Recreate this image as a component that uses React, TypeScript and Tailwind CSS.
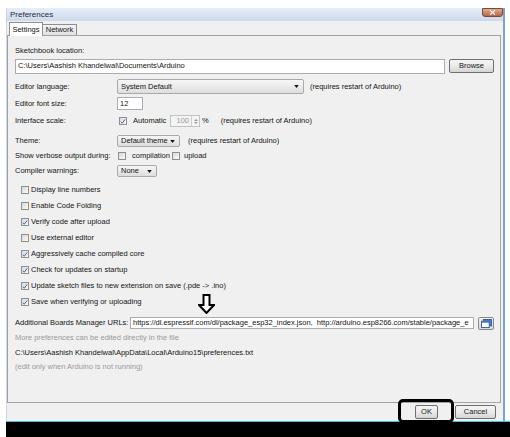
import React from "react";

function Box({ checked }: { checked?: boolean }) {
  return (
    <span className="w-[8px] h-[8px] border border-[#8e8f8f] bg-linear-to-br from-[#d8d8d8] to-[#fbfbfb] flex items-center justify-center shrink-0">
      {checked && (
        <svg viewBox="0 0 8 8" className="w-[7px] h-[7px]">
          <path d="M1.3 4.3 L3.1 6.3 L6.8 1.2" stroke="#3b5ba6" strokeWidth="1.3" fill="none" />
        </svg>
      )}
    </span>
  );
}

function Tri() {
  return (
    <svg viewBox="0 0 6 4" className="w-[5px] h-[3px] shrink-0">
      <path d="M0 0 H6 L3 4 Z" fill="#111" />
    </svg>
  );
}

function Drop({ w, h, label }: { w: string; h: string; label: string }) {
  return (
    <div className={`${w} ${h} border border-[#a9a9a9] rounded-[2px] bg-linear-to-b from-[#f6f6f6] to-[#dedede] flex items-center justify-between pl-[3px] pr-[4px] shrink-0`}>
      <span>{label}</span>
      <Tri />
    </div>
  );
}

function Btn({ w, label }: { w: string; label: string }) {
  return (
    <div className={`${w} h-[14px] border border-[#707070] rounded-[2px] bg-linear-to-b from-[#f4f4f4] via-[#ebebeb] to-[#d4d4d4] flex items-center justify-center shrink-0`}>
      {label}
    </div>
  );
}

const checks: [string, boolean][] = [
  ["Display line numbers", false],
  ["Enable Code Folding", false],
  ["Verify code after upload", true],
  ["Use external editor", false],
  ["Aggressively cache compiled core", true],
  ["Check for updates on startup", true],
  ["Update sketch files to new extension on save (.pde -> .ino)", true],
  ["Save when verifying or uploading", true],
];

export default function App() {
  return (
    <div className="w-[510px] h-[437px] bg-white relative overflow-hidden font-['Liberation_Sans',Arial,sans-serif] text-[7.5px] leading-none text-[#141414]">
      <div className="ml-[6px] mt-[8px] w-[499px] h-[413px] flex flex-col bg-[#f0f0f0] border-l border-r-2 border-l-[#c9d5ea] border-r-[#7aa3d4]">
        {/* title bar */}
        <div className="h-[13px] flex items-start justify-between bg-linear-to-b from-[#e6eef8] to-[#cddaeb] shrink-0">
          <span className="ml-[3px] mt-[3px] text-[8px] text-[#1e2a3a]">Preferences</span>
          <div className="w-[21px] h-[9px] border border-[#7e4a36] rounded-b-[3px] bg-linear-to-b from-[#dfa98d] to-[#b5664a] flex items-center justify-center">
            <svg viewBox="0 0 8 6" className="w-[7px] h-[5px]">
              <path d="M1 0.5 L7 5.5 M7 0.5 L1 5.5" stroke="#fff" strokeWidth="1.4" />
            </svg>
          </div>
        </div>
        {/* tabs */}
        <div className="h-[14px] flex items-end pl-[2px] shrink-0 relative z-10">
          <div className="w-[34px] h-[14px] -mb-px bg-white border border-b-0 border-[#8c8e94] flex items-center justify-center">
            Settings
          </div>
          <div className="w-[34px] h-[11px] bg-linear-to-b from-[#f2f2f2] to-[#e2e2e2] border border-l-0 border-b-0 border-[#8c8e94] flex items-center justify-center">
            Network
          </div>
        </div>
        {/* panel */}
        <div className="h-[368px] mr-[2px] border border-[#a3a3a3] bg-[#f0f0f0] flex flex-col pl-[7px] pr-[6px] pt-[8px] shrink-0 relative">
          <div className="h-[14px] flex items-center">Sketchbook location:</div>
          <div className="h-[16px] flex items-center gap-[4px]">
            <div className="w-[430px] h-[15px] bg-white border border-[#abadb3] flex items-center pl-[2px]">
              C:\Users\Aashish Khandelwal\Documents\Arduino
            </div>
            <Btn w="w-[45px]" label="Browse" />
          </div>
          <div className="h-[15px] mt-[5px] flex items-center">
            <span className="w-[102px] shrink-0">Editor language:</span>
            <Drop w="w-[187px]" h="h-[15px]" label="System Default" />
            <span className="ml-[6px]">(requires restart of Arduino)</span>
          </div>
          <div className="h-[15px] mt-[2px] flex items-center">
            <span className="w-[102px] shrink-0">Editor font size:</span>
            <div className="w-[26px] h-[13px] bg-white border border-[#abadb3] flex items-center pl-[2px]">12</div>
          </div>
          <div className="h-[14px] mt-[3px] flex items-center">
            <span className="w-[104px] shrink-0">Interface scale:</span>
            <Box checked />
            <span className="ml-[6px] w-[37px]">Automatic</span>
            <div className="w-[30px] h-[12px] border border-[#c2c2c2] bg-[#f4f4f4] flex items-center justify-end">
              <span className="text-[#9a9a9a] mr-[2px]">100</span>
              <div className="w-[8px] h-full border-l border-[#d0d0d0] flex flex-col items-center justify-center gap-[1px]">
                <svg viewBox="0 0 6 3" className="w-[4px] h-[2px]"><path d="M0 3 L3 0 L6 3 Z" fill="#9a9a9a" /></svg>
                <svg viewBox="0 0 6 3" className="w-[4px] h-[2px]"><path d="M0 0 H6 L3 3 Z" fill="#9a9a9a" /></svg>
              </div>
            </div>
            <span className="ml-[2px]">%</span>
            <span className="ml-[12px]">(requires restart of Arduino)</span>
          </div>
          <div className="h-[14px] mt-[6px] flex items-center">
            <span className="w-[102px] shrink-0">Theme:</span>
            <Drop w="w-[63px]" h="h-[12px]" label="Default theme" />
            <span className="ml-[8px]">(requires restart of Arduino)</span>
          </div>
          <div className="h-[14px] mt-[1px] flex items-center">
            <span className="w-[103px] shrink-0">Show verbose output during:</span>
            <div className="w-[54px] flex items-center gap-[6px]">
              <Box />
              <span>compilation</span>
            </div>
            <div className="flex items-center gap-[4px]">
              <Box />
              <span>upload</span>
            </div>
          </div>
          <div className="h-[14px] mt-[1px] flex items-center">
            <span className="w-[102px] shrink-0">Compiler warnings:</span>
            <Drop w="w-[40px]" h="h-[12px]" label="None" />
          </div>
          <div className="mt-[4px] flex flex-col pl-[6px]">
            {checks.map(([t, c]) => (
              <div key={t} className="h-[16px] flex items-center gap-[2px]">
                <Box checked={c} />
                <span>{t}</span>
              </div>
            ))}
          </div>
          <div className="h-[14px] mt-[6px] flex items-center">
            <span className="w-[115px] shrink-0">Additional Boards Manager URLs:</span>
            <div className="w-[345px] h-[12px] bg-white border border-[#abadb3] flex items-center pl-[2px] overflow-hidden whitespace-nowrap">
              https://dl.espressif.com/dl/package_esp32_index.json,&nbsp; http://arduino.esp8266.com/stable/package_e
            </div>
            <div className="ml-[4px] w-[16px] h-[13px] border border-[#8a8a8a] rounded-[2px] bg-linear-to-b from-[#f4f4f4] to-[#d6d6d6] flex items-center justify-center">
              <svg viewBox="0 0 12 10" className="w-[11px] h-[9px]">
                <rect x="2.5" y="0.5" width="9" height="7" fill="#4f7fc4" stroke="#2c58a0" />
                <rect x="0.5" y="2.5" width="8.5" height="7" fill="#fff" stroke="#2c58a0" />
                <rect x="0.5" y="2.5" width="8.5" height="1.6" fill="#3f73c0" />
              </svg>
            </div>
          </div>
          <div className="h-[14px] mt-[1px] flex items-center text-[#9a9a9a]">More preferences can be edited directly in the file</div>
          <div className="h-[14px] mt-[1px] flex items-center">C:\Users\Aashish Khandelwal\AppData\Local\Arduino15\preferences.txt</div>
          <div className="h-[14px] flex items-center text-[#9a9a9a]">(edit only when Arduino is not running)</div>

          {/* annotation arrow */}
          <svg viewBox="0 0 17 20" className="absolute left-[190px] top-[258px] w-[17px] h-[20px]">
            <path d="M5.5 1 H11.5 V11 H16 L8.5 19 L1 11 H5.5 Z" fill="#fff" stroke="#000" strokeWidth="2" strokeLinejoin="miter" />
          </svg>
        </div>
        {/* bottom buttons */}
        <div className="h-[18px] flex items-center justify-end pr-[7px] gap-[17px] shrink-0">
          <Btn w="w-[23px]" label="OK" />
          <Btn w="w-[41px]" label="Cancel" />
        </div>
      </div>
      <div className="ml-[6px] h-[16px] bg-black border-t border-[#4fc1d6]" />
      {/* annotation around OK */}
      <div className="absolute left-[398px] top-[399px] w-[56px] h-[24px] border-[3px] border-black rounded-[5px]" />
    </div>
  );
}
